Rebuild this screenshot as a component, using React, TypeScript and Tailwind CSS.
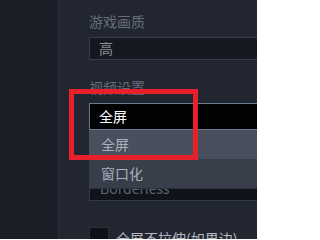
import React from 'react'

const font = { fontFamily: '"Noto Sans CJK SC", "Noto Sans", sans-serif' }

// Dropdown option row
function Option({ label, active }: { label: string; active?: boolean }) {
  return (
    <div
      className={`h-[29px] flex items-center pl-[12px] text-[14px] text-[#aab0bb] ${
        active ? 'bg-[#4a4f5e]' : 'bg-[#393e4b]'
      }`}
    >
      {label}
    </div>
  )
}

export default function App() {
  return (
    <div className="w-[257px] h-[239px] overflow-hidden flex bg-[#222631]" style={font}>
      {/* Sidebar */}
      <div className="w-[59px] shrink-0 bg-[#1b1e27] border-r border-[#2b303b]" />

      {/* Settings panel */}
      <div className="flex-1 pl-[30px] pt-[11px] flex flex-col">
        <div className="text-[14px] leading-[20px] text-[#666d7c]">游戏画质</div>
        <div className="mt-[6px] h-[27px] bg-[#15181f] border border-[#363d4b] border-r-0 flex items-center pl-[9px] text-[14px] text-[#8a909c]">
          高
        </div>

        <div className="mt-[17px] text-[14px] leading-[20px] text-[#666d7c]">视频设置</div>

        <div className="relative mt-[6px]">
          <div className="h-[27px] bg-[#010204] border border-[#6a7a91] border-r-0 flex items-center pl-[9px] text-[14px] text-white">
            全屏
          </div>
          {/* Underlying control partly hidden by the open list */}
          <div className="h-[71px] bg-[#10131a] border-l border-b border-[#333a47] flex items-end pl-[10px] pb-[6px] text-[14px] leading-[12px] text-[#5d6472] overflow-hidden">
            Borderless
          </div>

          {/* Open list */}
          <div className="absolute left-0 right-0 top-[27px] h-[59px] flex flex-col">
            <Option label="全屏" active />
            <Option label="窗口化" />
            <div className="h-[1px] bg-[#2c303b]" />
          </div>

          {/* Red highlight frame */}
          <div className="absolute left-[-20px] top-[-14px] w-[129px] h-[71px] border-[5px] border-[#e8202a]" />
        </div>

        <div className="mt-[26px] flex items-start gap-[7px]">
          <div className="w-[20px] h-[20px] shrink-0 bg-[#0e1117] border border-[#2a2f3a]" />
          <div className="text-[14px] leading-[20px] text-[#b4b9c3] mt-[1px] whitespace-nowrap">全屏不拉伸(如果边)</div>
        </div>
      </div>
    </div>
  )
}
